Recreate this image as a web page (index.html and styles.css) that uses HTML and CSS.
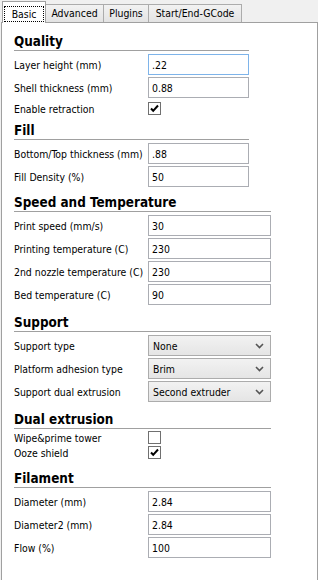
FILE: index.html
```html
<!DOCTYPE html>
<html lang="en">
<head>
    <meta charset="UTF-8">
    <meta name="viewport" content="width=device-width, initial-scale=1.0">
    <title>Basic settings</title>
    <link rel="stylesheet" href="styles.css">
</head>
<body>
    <div class="tabs">
        <div class="tab active"><span class="focus">Basic</span></div>
        <div class="tab advanced">Advanced</div>
        <div class="tab plugins">Plugins</div>
        <div class="tab gcode">Start/End-GCode</div>
    </div>

    <div class="panel">
        <section class="group">
            <h2>Quality</h2>
            <div class="row"><label>Layer height (mm)</label><input class="field focused" type="text" value=".22"></div>
            <div class="row"><label>Shell thickness (mm)</label><input class="field" type="text" value="0.88"></div>
            <div class="row check first-check"><label>Enable retraction</label>
                <span class="box"><svg width="11" height="11" viewBox="0 0 11 11"><path d="M2 5.5 L4.2 7.8 L9 2.5" fill="none" stroke="#000" stroke-width="2"/></svg></span>
            </div>
        </section>

        <section class="group fill">
            <h2>Fill</h2>
            <div class="row"><label>Bottom/Top thickness (mm)</label><input class="field" type="text" value=".88"></div>
            <div class="row"><label>Fill Density (%)</label><input class="field" type="text" value="50"></div>
        </section>

        <section class="group wide speed">
            <h2>Speed and Temperature</h2>
            <div class="row"><label>Print speed (mm/s)</label><input class="field" type="text" value="30"></div>
            <div class="row"><label>Printing temperature (C)</label><input class="field" type="text" value="230"></div>
            <div class="row"><label>2nd nozzle temperature (C)</label><input class="field" type="text" value="230"></div>
            <div class="row"><label>Bed temperature (C)</label><input class="field" type="text" value="90"></div>
        </section>

        <section class="group wide">
            <h2>Support</h2>
            <div class="row"><label>Support type</label>
                <div class="select"><span>None</span><svg width="9" height="6" viewBox="0 0 9 6"><path d="M1 1 L4.5 4.5 L8 1" fill="none" stroke="#555" stroke-width="1.6"/></svg></div>
            </div>
            <div class="row"><label>Platform adhesion type</label>
                <div class="select"><span>Brim</span><svg width="9" height="6" viewBox="0 0 9 6"><path d="M1 1 L4.5 4.5 L8 1" fill="none" stroke="#555" stroke-width="1.6"/></svg></div>
            </div>
            <div class="row"><label>Support dual extrusion</label>
                <div class="select"><span>Second extruder</span><svg width="9" height="6" viewBox="0 0 9 6"><path d="M1 1 L4.5 4.5 L8 1" fill="none" stroke="#555" stroke-width="1.6"/></svg></div>
            </div>
        </section>

        <section class="group wide dual">
            <h2>Dual extrusion</h2>
            <div class="row check"><label>Wipe&amp;prime tower</label><span class="box"></span></div>
            <div class="row check"><label>Ooze shield</label>
                <span class="box"><svg width="11" height="11" viewBox="0 0 11 11"><path d="M2 5.5 L4.2 7.8 L9 2.5" fill="none" stroke="#000" stroke-width="2"/></svg></span>
            </div>
        </section>

        <section class="group wide filament">
            <h2>Filament</h2>
            <div class="row"><label>Diameter (mm)</label><input class="field" type="text" value="2.84"></div>
            <div class="row"><label>Diameter2 (mm)</label><input class="field" type="text" value="2.84"></div>
            <div class="row"><label>Flow (%)</label><input class="field" type="text" value="100"></div>
        </section>
    </div>
</body>
</html>
```

FILE: styles.css
```css
body {
    margin: 0;
    padding: 0;
    width: 318px;
    height: 580px;
    overflow: hidden;
    background-color: #f0f0f0;
    font-family: "DejaVu Sans Condensed", "DejaVu Sans", sans-serif;
    font-stretch: condensed;
    font-size: 10.4px;
    color: #000;
}

.tabs {
    display: flex;
    align-items: flex-end;
    height: 22px;
    padding-left: 2px;
}

.tab {
    height: 17px;
    line-height: 17px;
    text-align: center;
    border: 1px solid #acacac;
    border-bottom: none;
    margin-right: -1px;
    box-sizing: content-box;
    background: linear-gradient(#f2f2f2, #e3e3e3);
}

.tab.advanced {
    width: 57px;
}

.tab.plugins {
    width: 44px;
}

.tab.gcode {
    width: 92px;
}

.tab.active {
    position: relative;
    z-index: 1;
    width: 42px;
    height: 21px;
    margin-bottom: -1px;
    background: #fff;
    border-color: #a0a0a0;
}

.tab .focus {
    display: block;
    margin: 4px 1px 0;
    height: 14px;
    line-height: 14px;
    border: 1px dotted #000;
}

.panel {
    margin-left: 1px;
    height: 558px;
    padding: 1px 0 0 12px;
    background: #fff;
    border: 1px solid #a0a0a0;
    border-bottom: none;
    box-sizing: border-box;
}

.group {
    width: 235px;
}

.group.wide {
    width: 257px;
}

.group h2 {
    margin: 10px 0 3px;
    height: 16px;
    line-height: 16px;
    font-size: 13.4px;
    font-weight: bold;
    border-bottom: 1px solid #a0a0a0;
}

.group.fill h2 {
    margin-top: 7px;
}

.group.speed h2 {
    margin-top: 8px;
}

.group.dual h2 {
    margin-bottom: 1px;
}

.group.filament h2 {
    margin-top: 11px;
}

.row {
    display: grid;
    grid-template-columns: 134px 1fr;
    align-items: center;
    height: 21px;
    margin-bottom: 2px;
    white-space: nowrap;
}

.row.check {
    height: 15px;
    margin-bottom: 0;
}

.row.first-check {
    margin-top: 3px;
}

.field {
    width: 100%;
    min-width: 0;
    height: 21px;
    box-sizing: border-box;
    margin: 0;
    padding: 0 3px;
    border: 1px solid #abadb3;
    font: inherit;
    color: #000;
    background: #fff;
    outline: none;
}

.field.focused {
    border-color: #7eb4ea;
}

.select {
    display: flex;
    align-items: center;
    justify-content: space-between;
    height: 21px;
    box-sizing: border-box;
    padding: 0 6px 0 4px;
    border: 1px solid #acacac;
    background: linear-gradient(#f2f2f2, #e5e5e5);
}

.box {
    display: flex;
    align-items: center;
    justify-content: center;
    width: 13px;
    height: 13px;
    box-sizing: border-box;
    border: 1px solid #707070;
    background: #fff;
}
```
